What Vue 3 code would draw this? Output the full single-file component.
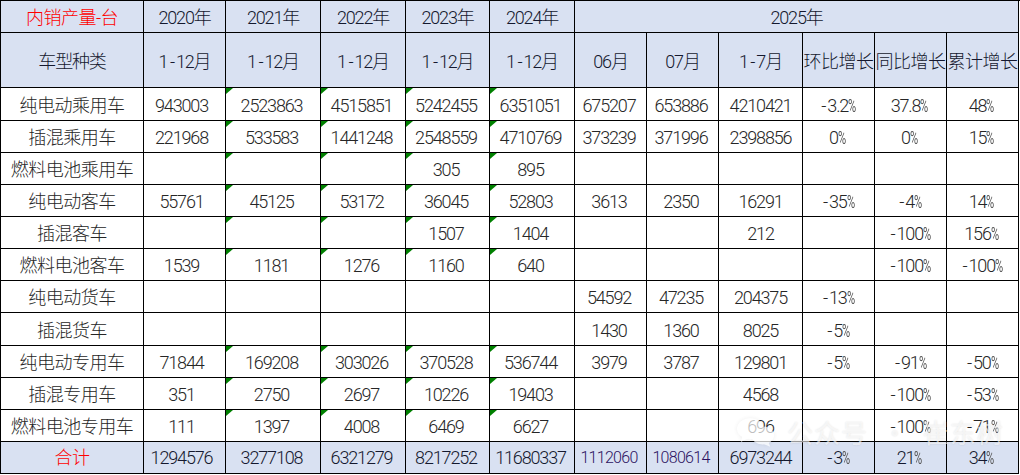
<script setup>
const widths = [143, 82, 95, 85, 84, 85, 72, 72, 84, 72, 72, 72]
const heights = [33, 32, 32, 32, 32, 32, 32, 33, 32, 32, 32]
const rows = [
  ['纯电动乘用车', '943003', '2523863', '4515851', '5242455', '6351051', '675207', '653886', '4210421', '-3.2', '37.8', '48'],
  ['插混乘用车', '221968', '533583', '1441248', '2548559', '4710769', '373239', '371996', '2398856', '0', '0', '15'],
  ['燃料电池乘用车', '', '', '', '305', '895', '', '', '', '', '', ''],
  ['纯电动客车', '55761', '45125', '53172', '36045', '52803', '3613', '2350', '16291', '-35', '-4', '14'],
  ['插混客车', '', '', '', '1507', '1404', '', '', '212', '', '-100', '156'],
  ['燃料电池客车', '1539', '1181', '1276', '1160', '640', '', '', '', '', '-100', '-100'],
  ['纯电动货车', '', '', '', '', '', '54592', '47235', '204375', '-13', '', ''],
  ['插混货车', '', '', '', '', '', '1430', '1360', '8025', '-5', '', ''],
  ['纯电动专用车', '71844', '169208', '303026', '370528', '536744', '3979', '3787', '129801', '-5', '-91', '-50'],
  ['插混专用车', '351', '2750', '2697', '10226', '19403', '', '', '4568', '', '-100', '-53'],
  ['燃料电池专用车', '111', '1397', '4008', '6469', '6627', '', '', '696', '', '-100', '-71']
]
const years = ['2020年', '2021年', '2022年', '2023年', '2024年']
const periods = ['1-12月', '1-12月', '1-12月', '1-12月', '1-12月', '06月', '07月', '1-7月', '环比增长', '同比增长', '累计增长']
const totals = ['1294576', '3277108', '6321279', '8217252', '11680337', '1112060', '1080614', '6973244', '-3', '21', '34']
const hasMark = (r, c) => c >= 2 && c <= 5 && r !== 6 && r !== 7
const split = (s) => {
  const i = s.indexOf('-')
  return i < 0 ? ['', '', s] : [s.slice(0, i), '-', s.slice(i + 1)]
}
</script>

<template>
  <div class="page">
    <table class="sheet">
      <colgroup>
        <col v-for="(w, i) in widths" :key="i" :style="{ width: w + 'px' }" />
      </colgroup>
      <tbody>
        <tr class="head top">
          <td class="red">内销产量-台</td>
          <td v-for="y in years" :key="y">{{ y }}</td>
          <td colspan="7">2025年</td>
        </tr>
        <tr class="head second">
          <td>车型种类</td>
          <td v-for="(p, i) in periods" :key="i" :class="{ tight: i > 7 }">{{ split(p)[0] }}<span v-if="split(p)[1]" class="dash">-</span>{{ split(p)[2] }}</td>
        </tr>
        <tr v-for="(row, r) in rows" :key="r" class="body" :style="{ height: heights[r] + 'px' }">
          <td v-for="(cell, c) in row" :key="c" :class="{ mark: hasMark(r, c), left: c >= 1 && c <= 7, first: c === 1 }">
            <span v-if="split(cell)[1]" class="dash">-</span>{{ split(cell)[2] }}<span v-if="c >= 9 && cell" class="pct">%</span>
          </td>
        </tr>
        <tr class="total">
          <td class="red">合计</td>
          <td v-for="(t, i) in totals" :key="i" :class="{ small: i === 5 || i === 6, left: i <= 6, first: i === 0 }">
            <span v-if="split(t)[1]" class="dash">-</span>{{ split(t)[2] }}<span v-if="i >= 8" class="pct">%</span>
          </td>
        </tr>
      </tbody>
    </table>
    <div class="watermark">
      <svg class="wechat" width="38" height="29" viewBox="0 0 40 30">
        <ellipse cx="14" cy="11" rx="14" ry="11" fill="#fff" />
        <path d="M6 18 L4 25 L12 21 Z" fill="#fff" />
        <ellipse cx="27" cy="18" rx="12" ry="9.5" fill="#fff" />
        <path d="M33 25 L35 30 L28 27 Z" fill="#fff" />
      </svg>
      <span class="mark-text">公众号 · 崔东树</span>
    </div>
  </div>
</template>

<style>
html, body { background: #fff; }
</style>

<style scoped>
.page {
  position: relative;
  width: 1020px;
  height: 475px;
  overflow: hidden;
  background: #fff;
}
.sheet {
  border-collapse: collapse;
  table-layout: fixed;
  width: 1019px;
  font-family: Roboto, "Noto Sans CJK SC", sans-serif;
  font-weight: 300;
  font-size: 18px;
  color: #262626;
}
.sheet td {
  border: 1px solid #000;
  padding: 3px 0 0;
  text-align: center;
  white-space: nowrap;
  line-height: 20px;
  letter-spacing: -1.15px;
  overflow: hidden;
  position: relative;
}
.sheet td.left { padding-right: 3px; }
.sheet td.first { padding-right: 6px; }
.head td, .total td {
  background: #d9e1f2;
  color: #14182e;
  padding-top: 0;
}
.top { height: 32px; }
.top td { padding-top: 2px; }
.second { height: 55px; }
.second td { padding-top: 4px; }
.total { height: 32px; }
.total td { padding-top: 1px; }
.sheet .tight { letter-spacing: -0.5px; }
.sheet .red { color: #ff0000; letter-spacing: -0.5px; }
.sheet .small { font-size: 16px; letter-spacing: -0.7px; color: #2c1160; }
.body td:first-child { letter-spacing: -0.5px; }
.dash { padding: 0 2px 0 2.5px; }
.mark::before {
  content: "";
  position: absolute;
  top: 0;
  left: 0;
  border-top: 6px solid #008000;
  border-right: 7px solid transparent;
}
.pct {
  display: inline-block;
  width: 10px;
  font-size: 18px;
  font-weight: 400;
  letter-spacing: 0;
  color: #555;
  text-align: left;
  transform: scaleX(0.62);
  transform-origin: left center;
}
.watermark {
  position: absolute;
  left: 737px;
  top: 417px;
  display: flex;
  align-items: center;
  gap: 12px;
  pointer-events: none;
}
.wechat {
  opacity: 0.7;
  filter: drop-shadow(0 0 2px rgba(0, 0, 0, 0.1));
}
.mark-text {
  font-family: "Noto Sans CJK SC", sans-serif;
  font-size: 26px;
  line-height: 30px;
  letter-spacing: 1px;
  word-spacing: 7px;
  color: rgba(255, 255, 255, 0.62);
  text-shadow: 0 0 2px rgba(0, 0, 0, 0.12);
  white-space: pre;
}
</style>
